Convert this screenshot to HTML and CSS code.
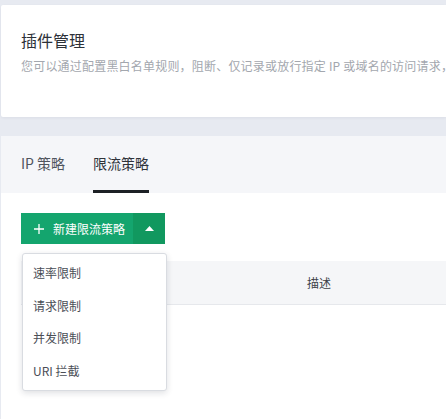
FILE: index.html
```html
<!DOCTYPE html>
<html lang="zh">
<head>
<meta charset="utf-8">
<link rel="stylesheet" href="styles.css">
</head>
<body>
<div class="page">
  <section class="card">
    <h1 class="title">插件管理</h1>
    <p class="desc">您可以通过配置黑白名单规则，阻断、仅记录或放行指定 IP 或域名的访问请求，</p>
  </section>
  <section class="panel">
    <nav class="tabs">
      <div class="tab">IP 策略</div>
      <div class="tab active">限流策略</div>
    </nav>
    <div class="content">
      <div class="btn-wrap">
        <div class="btn-group">
          <button class="btn-main">
            <svg class="plus" width="10" height="10" viewBox="0 0 10 10"><path d="M5 0v10M0 5h10" stroke="#fff" stroke-width="1.3" fill="none"/></svg>
            <span>新建限流策略</span>
          </button>
          <button class="btn-arrow">
            <svg width="9" height="5" viewBox="0 0 9 5"><path d="M0 5L4.5 0L9 5Z" fill="#fff"/></svg>
          </button>
        </div>
        <ul class="menu">
          <li>速率限制</li>
          <li>请求限制</li>
          <li>并发限制</li>
          <li>URI 拦截</li>
        </ul>
      </div>
      <div class="thead">
        <div class="th th-name"></div>
        <div class="th th-desc">描述</div>
      </div>
    </div>
  </section>
</div>
</body>
</html>
```

FILE: styles.css
```css
* { box-sizing: border-box; }
html, body { margin: 0; padding: 0; }
body {
  background: #e7eaf1;
  font-family: "Noto Sans CJK SC", "Noto Sans", sans-serif;
  width: 446px;
  height: 419px;
  overflow: hidden;
}
.page {
  padding-top: 5px;
  padding-left: 1px;
}
.card {
  background: #fff;
  height: 112px;
  padding: 23px 20px 0;
  border-radius: 2px 0 0 2px;
  box-shadow: 0 1px 3px rgba(30, 40, 60, 0.06);
  overflow: hidden;
}
.title {
  margin: 0;
  font-size: 16px;
  line-height: 24px;
  font-weight: 400;
  color: #2d3138;
}
.desc {
  margin: 5px 0 0;
  font-size: 12px;
  line-height: 18px;
  color: #a3a7ae;
  white-space: nowrap;
  letter-spacing: 0.2px;
}
.panel {
  margin-top: 19px;
  background: #fff;
}
.tabs {
  display: flex;
  background: #f5f6f9;
  padding-left: 20px;
  gap: 28px;
}
.tab {
  font-size: 14px;
  line-height: 20px;
  padding: 17px 0 17px;
  border-bottom: 3px solid transparent;
  color: #50555d;
}
.tab.active {
  color: #2f333a;
  border-bottom-color: #1d2025;
}
.content {
  padding: 20px 0 0 20px;
  height: 226px;
}
.btn-wrap {
  position: relative;
}
.btn-group {
  display: flex;
  height: 31px;
}
.btn-main, .btn-arrow {
  border: 0;
  margin: 0;
  font-family: inherit;
  color: #fff;
  display: flex;
  align-items: center;
  cursor: pointer;
}
.btn-main {
  width: 112px;
  background: #14a56e;
  padding: 0 0 0 13px;
  font-size: 12px;
  gap: 9px;
}
.btn-arrow {
  width: 32px;
  background: #11985f;
  justify-content: center;
  padding: 0;
}
.menu {
  position: absolute;
  top: 40px;
  left: 1px;
  width: 145px;
  margin: 0;
  padding: 3px 0;
  list-style: none;
  background: #fff;
  border: 1px solid #d9dce1;
  border-radius: 3px;
  box-shadow: 0 2px 6px rgba(20, 30, 50, 0.14);
  z-index: 2;
}
.menu li {
  height: 32.5px;
  line-height: 32.5px;
  padding-left: 10px;
  font-size: 12px;
  color: #4a4e56;
}
.thead {
  display: flex;
  margin-top: 17px;
  height: 44px;
  background: #f5f6f8;
  border-bottom: 1px solid #e6e8ec;
}
.th {
  font-size: 12px;
  line-height: 43px;
  color: #3e4249;
}
.th-name {
  width: 286px;
  padding-left: 16px;
}
.th-desc {
  flex: 1;
}
```
